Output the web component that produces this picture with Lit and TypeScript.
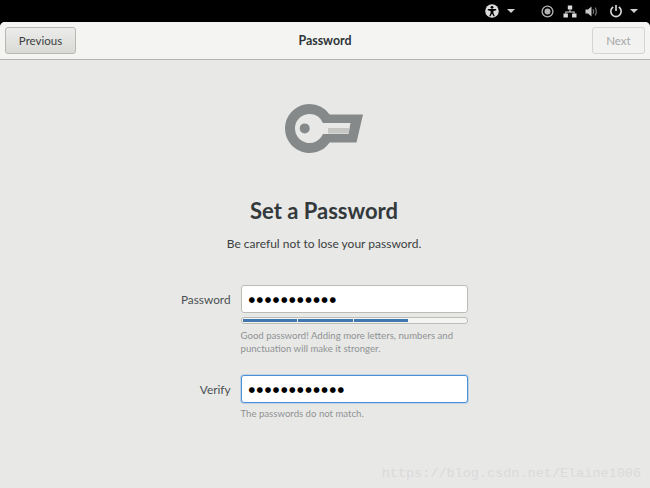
import { LitElement, css, html, svg } from 'lit';
import { customElement } from 'lit/decorators.js';

const keyIcon = svg`
  <svg class="key" width="78" height="50" viewBox="0 0 78 50">
    <path fill="#868989" fill-rule="evenodd" d="M24.5 0A24.5 24.5 0 0 1 44.6 10.5H78L71.5 38.5H44.6A24.5 24.5 0 1 1 24.5 0ZM24.5 10A14.5 14.5 0 1 0 37.9 30H63.5L65.5 19H37.9A14.5 14.5 0 0 0 24.5 10Z"/>
    <path fill="#c6c6c4" d="M43 24H64.6L63.6 29.5H43Z"/>
    <circle cx="19.7" cy="24.4" r="5" fill="#868989"/>
  </svg>`;

@customElement('app-root')
export class AppRoot extends LitElement {
  static styles = css`
    :host {
      display: block;
      position: relative;
      width: 650px;
      height: 488px;
      overflow: hidden;
      background: #000;
      font-family: Lato, "Noto Sans", sans-serif;
      color: #2e3436;
    }

    .topbar {
      height: 22px;
      display: flex;
      align-items: center;
      justify-content: flex-end;
      padding-right: 12px;
    }
    .topbar svg {
      display: block;
    }
    .a11y {
      margin-right: 8px;
    }
    .caret {
      width: 0;
      height: 0;
      border-left: 4px solid transparent;
      border-right: 4px solid transparent;
      border-top: 4px solid #d0d0d0;
    }
    .status {
      display: flex;
      align-items: center;
      margin-left: 26px;
      gap: 9px;
    }
    .speaker {
      margin-left: -1px;
    }
    .power {
      margin-left: 2px;
      margin-right: -2px;
    }

    .window {
      height: 466px;
      display: flex;
      flex-direction: column;
      background: #e8e8e7;
      border-radius: 5px 5px 0 0;
      overflow: hidden;
    }

    .header {
      height: 38px;
      box-sizing: border-box;
      display: grid;
      grid-template-columns: 1fr auto 1fr;
      align-items: center;
      padding: 0 5px;
      background: #f4f4f3;
      border-bottom: 1px solid #b4b4ae;
    }
    .header h1 {
      margin: 0;
      font-size: 12.4px;
      font-weight: 700;
      color: #2e3436;
    }
    .btn {
      box-sizing: border-box;
      height: 27px;
      display: flex;
      align-items: center;
      justify-content: center;
      font-size: 11.5px;
      border-radius: 3px;
    }
    .prev {
      width: 71px;
      border: 1px solid #b8b8b2;
      background: linear-gradient(#ececea, #d9d9d6);
      color: #3a3f40;
    }
    .next {
      width: 53px;
      justify-self: end;
      border: 1px solid #d4d4d0;
      background: #f2f2f1;
      color: #a6a8a8;
    }

    .page {
      flex: 1;
      display: flex;
      flex-direction: column;
      align-items: center;
      padding: 44px 2px 0 0;
    }
    .key {
      display: block;
    }
    .page h2 {
      margin: 42px 0 0;
      font-size: 22px;
      line-height: 30px;
      font-weight: 700;
      color: #33393b;
    }
    .lead {
      margin: 10px 0 0;
      font-size: 12px;
      line-height: 16px;
      color: #3a3f40;
    }

    .form {
      margin-top: 33px;
      display: grid;
      grid-template-columns: 62px 227px;
      column-gap: 10px;
      margin-left: -12px;
      align-items: center;
    }
    .label {
      text-align: right;
      font-size: 11.8px;
      color: #4a5052;
    }
    .entry {
      box-sizing: border-box;
      height: 28px;
      display: flex;
      align-items: center;
      padding-left: 7px;
      background: #fff;
      border: 1px solid #bcbcb6;
      border-radius: 3px;
      font-family: "DejaVu Sans", sans-serif;
      font-size: 7.5px;
      letter-spacing: 1.55px;
      color: #000;
    }
    .entry.focus {
      border-color: #4a90d9;
      box-shadow: 0 0 0 1px rgba(74, 144, 217, 0.25);
    }
    .meter {
      grid-column: 2;
      box-sizing: border-box;
      height: 7px;
      margin-top: 4px;
      padding: 1px;
      display: flex;
      gap: 1px;
      background: #f4f4f3;
      border: 1px solid #bcbcb6;
      border-radius: 3px;
    }
    .meter span {
      width: 54.5px;
      background: #3f77ae;
    }
    .hint {
      grid-column: 2;
      margin: 5px 0 0;
      font-size: 9.6px;
      line-height: 13px;
      color: #8f9393;
    }
    .verify-label,
    .verify {
      margin-top: 20px;
    }
    .hint.last {
      margin-top: 4px;
    }

    .watermark {
      position: absolute;
      right: 9px;
      bottom: 7px;
      font-family: "Liberation Mono", monospace;
      font-size: 13.5px;
      color: #dadad9;
    }
  `;

  render() {
    return html`
      <div class="topbar">
        <svg class="a11y" width="14" height="14" viewBox="0 0 14 14">
          <circle cx="7" cy="7" r="6.8" fill="#dcdcdc"/>
          <circle cx="7" cy="3.3" r="1.4" fill="#000"/>
          <path fill="#000" d="M2.8 5h8.4v1.2L8.4 7v2l1.4 3.2h-1.3L7 9.6 5.5 12.2H4.2L5.6 9V7L2.8 6.2Z"/>
        </svg>
        <span class="caret"></span>
        <div class="status">
          <svg width="13" height="13" viewBox="0 0 13 13">
            <circle cx="6.5" cy="6.5" r="5.4" fill="none" stroke="#b4b4b4" stroke-width="1.3"/>
            <circle cx="6.5" cy="6.5" r="3" fill="#b4b4b4"/>
          </svg>
          <svg width="14" height="13" viewBox="0 0 14 13" fill="#dcdcdc">
            <rect x="4.8" y="0.5" width="4.4" height="4"/>
            <rect x="0.5" y="8.5" width="4.4" height="4"/>
            <rect x="9.1" y="8.5" width="4.4" height="4"/>
            <path d="M6.5 4.5h1v2h4.2v2h-1v-1h-7.4v1h-1v-2h4.2z"/>
          </svg>
          <svg class="speaker" width="13" height="13" viewBox="0 0 13 13" fill="none">
            <path fill="#c8c8c8" d="M0.5 4.5h2.5L6.5 1.5v10L3 8.5H0.5z"/>
            <path stroke="#777" stroke-width="1.2" d="M8 4.3q1.2 2.2 0 4.4M10.2 2.6q2.2 3.9 0 7.8"/>
          </svg>
          <svg class="power" width="14" height="14" viewBox="0 0 14 14" fill="none" stroke="#dcdcdc" stroke-width="1.6">
            <path d="M4.2 3A5.2 5.2 0 1 0 9.8 3"/>
            <path d="M7 1v6"/>
          </svg>
          <span class="caret"></span>
        </div>
      </div>
      <div class="window">
        <div class="header">
          <div class="btn prev">Previous</div>
          <h1>Password</h1>
          <div class="btn next">Next</div>
        </div>
        <div class="page">
          ${keyIcon}
          <h2>Set a Password</h2>
          <p class="lead">Be careful not to lose your password.</p>
          <div class="form">
            <div class="label">Password</div>
            <div class="entry">●●●●●●●●●●●</div>
            <div class="meter"><span></span><span></span><span></span></div>
            <p class="hint">Good password! Adding more letters, numbers and punctuation will make it stronger.</p>
            <div class="label verify-label">Verify</div>
            <div class="entry focus verify">●●●●●●●●●●●●</div>
            <p class="hint last">The passwords do not match.</p>
          </div>
        </div>
      </div>
      <div class="watermark">https://blog.csdn.net/Elaine1006</div>
    `;
  }
}
